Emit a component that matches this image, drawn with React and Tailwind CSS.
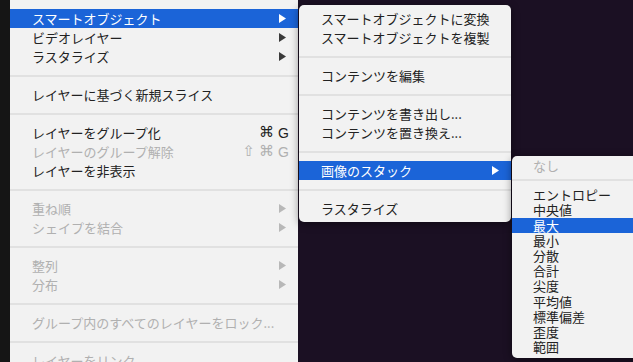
import React from "react";

const Arrow = ({ className }) => (
    <svg width="7" height="9" viewBox="0 0 7 9" className={className}>
        <polygon points="0,0 7,4.5 0,9" fill="currentColor" />
    </svg>
);

const Sep = ({ h = "h-[19px]" }) => (
    <div className={`${h} flex items-center`}>
        <div className="w-full h-[2px] bg-[#e1e1e1]" />
    </div>
);

const Shortcut = ({ keys }) => (
    <span className="flex items-center gap-[4px] mr-[-3px] leading-none font-['DejaVu_Sans',sans-serif] text-[14px]">
        {keys.map((k) => (
            <span key={k} className={k === "G" ? "font-['Liberation_Sans',sans-serif]" : "text-[15px]"}>{k}</span>
        ))}
    </span>
);

const Item = ({ label, sub, shortcut, disabled, active }) => (
    <div
        className={`h-[19px] flex items-center justify-between pl-[22px] pr-[12px] ${
            active ? "bg-[#1b64d8] text-white" : disabled ? "text-[#b0b0b0]" : "text-[#222222]"
        }`}
    >
        <span className="leading-none">{label}</span>
        {sub && <Arrow className={active ? "text-white" : disabled ? "text-[#b8b8b8]" : "text-[#3a3a3a]"} />}
        {shortcut && <Shortcut keys={shortcut} />}
    </div>
);

const StackItem = ({ label, active, disabled }) => (
    <div
        className={`h-[15.2px] flex items-center pl-[21px] ${
            active ? "bg-[#1b64d8] text-white" : disabled ? "text-[#b0b0b0]" : "text-[#222222]"
        }`}
    >
        <span className="leading-[15px]">{label}</span>
    </div>
);

export default function App() {
    const stack = ["エントロピー", "中央値", "最大", "最小", "分散", "合計", "尖度", "平均値", "標準偏差", "歪度", "範囲"];

    return (
        <div className="relative w-[633px] h-[362px] overflow-hidden flex bg-[#1b1023] text-[13px] font-['Noto_Sans_CJK_JP','Noto_Sans',sans-serif]">
            <div className="w-[10px] bg-[#151515]" />

            {/* main menu */}
            <div className="w-[288px] bg-[#f2f2f2] pt-[9px]">
                <Item label="スマートオブジェクト" sub active />
                <Item label="ビデオレイヤー" sub />
                <Item label="ラスタライズ" sub />
                <Sep />
                <Item label="レイヤーに基づく新規スライス" />
                <Sep />
                <Item label="レイヤーをグループ化" shortcut={["⌘", "G"]} />
                <Item label="レイヤーのグループ解除" shortcut={["⇧", "⌘", "G"]} disabled />
                <Item label="レイヤーを非表示" />
                <Sep />
                <Item label="重ね順" sub disabled />
                <Item label="シェイプを結合" sub disabled />
                <Sep />
                <Item label="整列" sub disabled />
                <Item label="分布" sub disabled />
                <Sep />
                <Item label="グループ内のすべてのレイヤーをロック..." disabled />
                <Sep />
                <Item label="レイヤーをリンク" disabled />
            </div>

            {/* smart object submenu */}
            <div className="absolute left-[299px] top-[5px] w-[212px] bg-[#f2f2f2] rounded-[5px] py-[4px] shadow-[0_2px_8px_rgba(0,0,0,0.45)]">
                <Item label="スマートオブジェクトに変換" />
                <Item label="スマートオブジェクトを複製" />
                <Sep />
                <Item label="コンテンツを編集" />
                <Sep />
                <Item label="コンテンツを書き出し..." />
                <Item label="コンテンツを置き換え..." />
                <Sep />
                <Item label="画像のスタック" sub active />
                <Sep />
                <Item label="ラスタライズ" />
            </div>

            {/* image stack submenu */}
            <div className="absolute left-[512px] top-[156px] w-[130px] bg-[#f2f2f2] rounded-[5px] pt-[2px] pb-[4px] shadow-[0_2px_8px_rgba(0,0,0,0.45)]">
                <StackItem label="なし" disabled />
                <Sep h="h-[14px]" />
                {stack.map((s) => (
                    <StackItem key={s} label={s} active={s === "最大"} />
                ))}
            </div>
        </div>
    );
}
